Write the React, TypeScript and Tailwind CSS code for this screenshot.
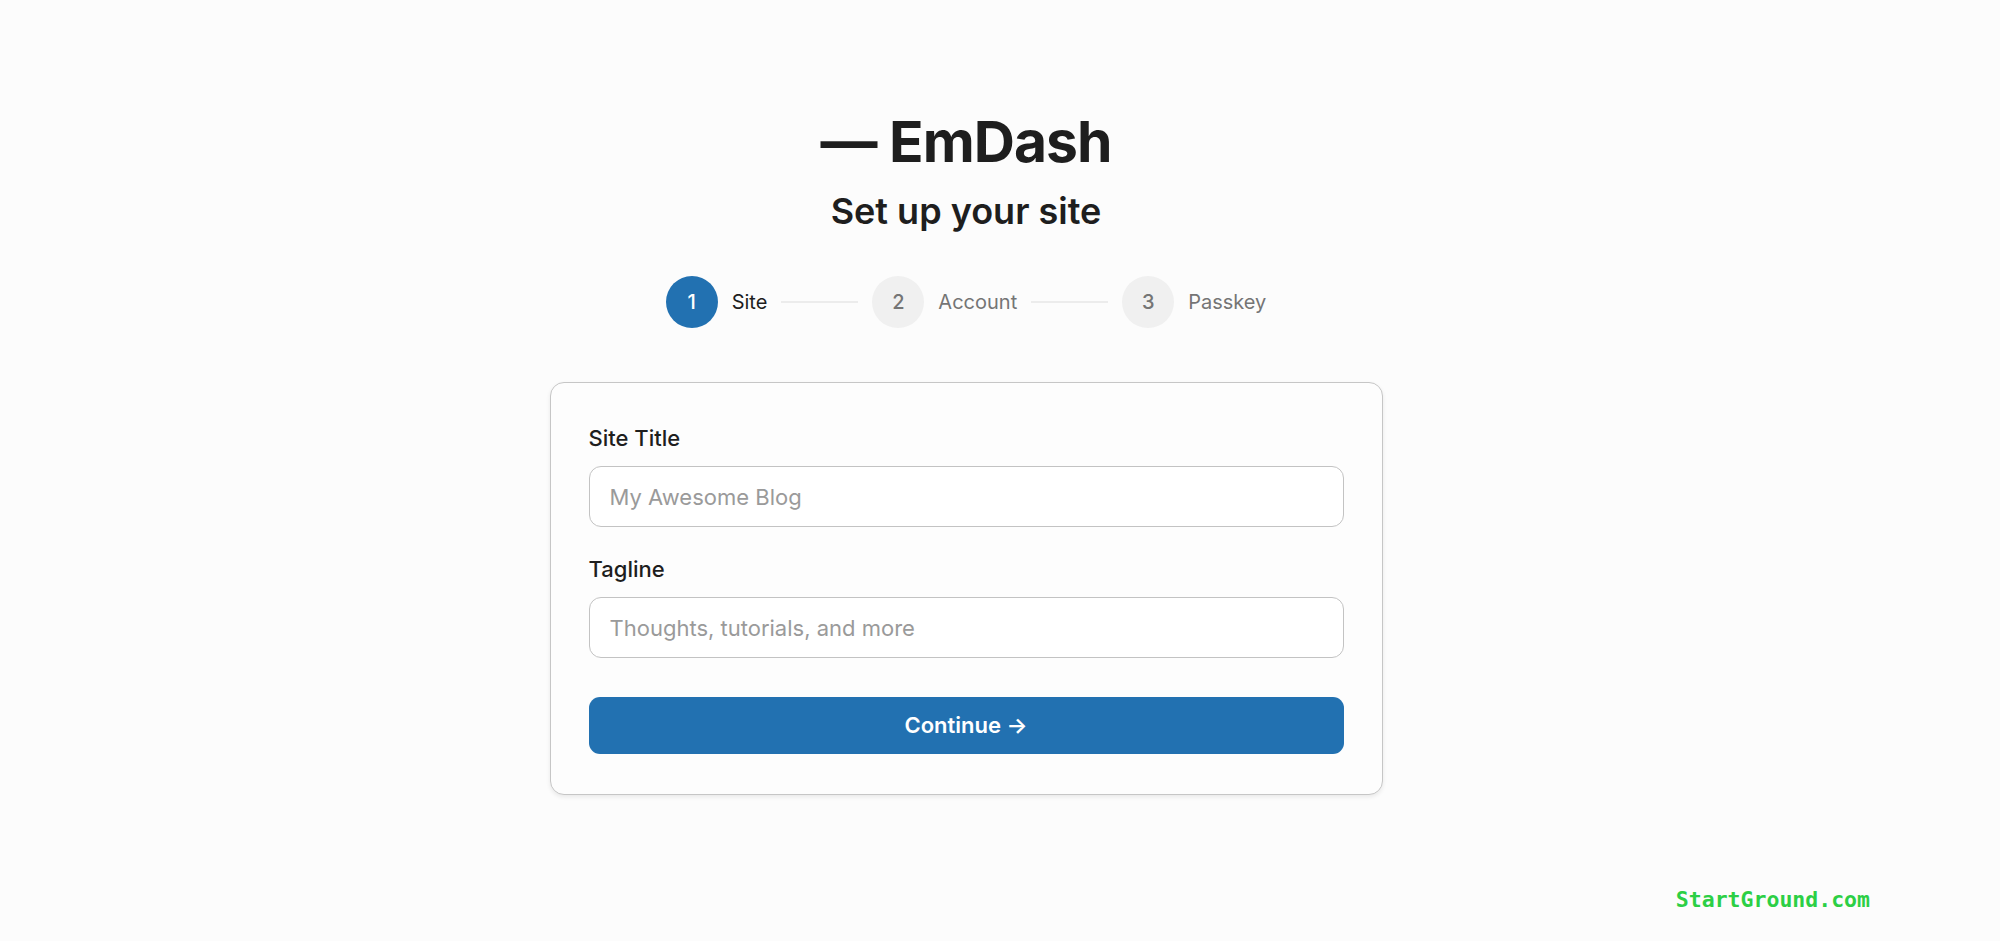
import { useState } from 'react'

const steps = [
  { n: 1, label: 'Site' },
  { n: 2, label: 'Account' },
  { n: 3, label: 'Passkey' },
]

function Stepper({ current }: { current: number }) {
  return (
    <div className="flex items-center gap-[14px]">
      {steps.map((s, i) => {
        const active = s.n === current
        return (
          <div key={s.n} className="flex items-center gap-[14px]">
            {i > 0 && <div className="h-[2px] w-[77px] bg-[#ececec]" />}
            <div
              className={
                active
                  ? 'flex h-[52px] w-[52px] items-center justify-center rounded-full bg-[#2271b1] text-[20px] font-medium text-white'
                  : 'flex h-[52px] w-[52px] items-center justify-center rounded-full bg-[#f0f0f0] text-[20px] font-medium text-[#757575]'
              }
            >
              {s.n}
            </div>
            <span className={active ? 'text-[20px] text-[#1e1e1e]' : 'text-[20px] text-[#757575]'}>
              {s.label}
            </span>
          </div>
        )
      })}
    </div>
  )
}

function Field({ label, placeholder, value, onChange }: {
  label: string
  placeholder: string
  value: string
  onChange: (v: string) => void
}) {
  return (
    <label className="flex flex-col">
      <span className="mb-[14px] text-[22px] leading-[28px] font-medium text-[#1e1e1e]">{label}</span>
      <input
        value={value}
        onChange={(e) => onChange(e.target.value)}
        placeholder={placeholder}
        className="h-[61px] w-full rounded-[12px] border border-[#c3c3c3] bg-white px-[20px] text-[22px] text-[#1e1e1e] outline-none placeholder:text-[#9a9a9a] focus:border-[#2271b1]"
      />
    </label>
  )
}

export default function App() {
  const [title, setTitle] = useState('')
  const [tagline, setTagline] = useState('')

  return (
    <div className="relative min-h-screen bg-[#fcfcfc] font-['Inter',sans-serif]">
      <div className="flex flex-col items-center pt-[113px] pr-[68px]">
        <h1 className="text-[57px] leading-none font-bold tracking-[-1px] text-[#1e1e1e]">— EmDash</h1>
        <h2 className="mt-[23px] text-[36px] leading-none font-semibold text-[#1e1e1e]">Set up your site</h2>

        <div className="mt-[47px]">
          <Stepper current={1} />
        </div>

        <form
          onSubmit={(e) => e.preventDefault()}
          className="mt-[54px] flex w-[833px] flex-col rounded-[14px] border border-[#c6c6c6] bg-[#fdfdfd] px-[38px] pt-[41px] pb-[40px] shadow-[0_2px_4px_rgba(0,0,0,0.08)]"
        >
          <div className="flex flex-col gap-[28px]">
            <Field label="Site Title" placeholder="My Awesome Blog" value={title} onChange={setTitle} />
            <Field label="Tagline" placeholder="Thoughts, tutorials, and more" value={tagline} onChange={setTagline} />
          </div>
          <button
            type="submit"
            className="mt-[39px] h-[57px] w-full rounded-[11px] bg-[#2271b1] text-[22px] font-semibold text-white"
          >
            Continue →
          </button>
        </form>
      </div>

      <div className="absolute right-[130px] bottom-[31px] font-['DejaVu_Sans_Mono',monospace] text-[21.5px] leading-none font-bold text-[#2ccf45]">
        StartGround.com
      </div>
    </div>
  )
}
